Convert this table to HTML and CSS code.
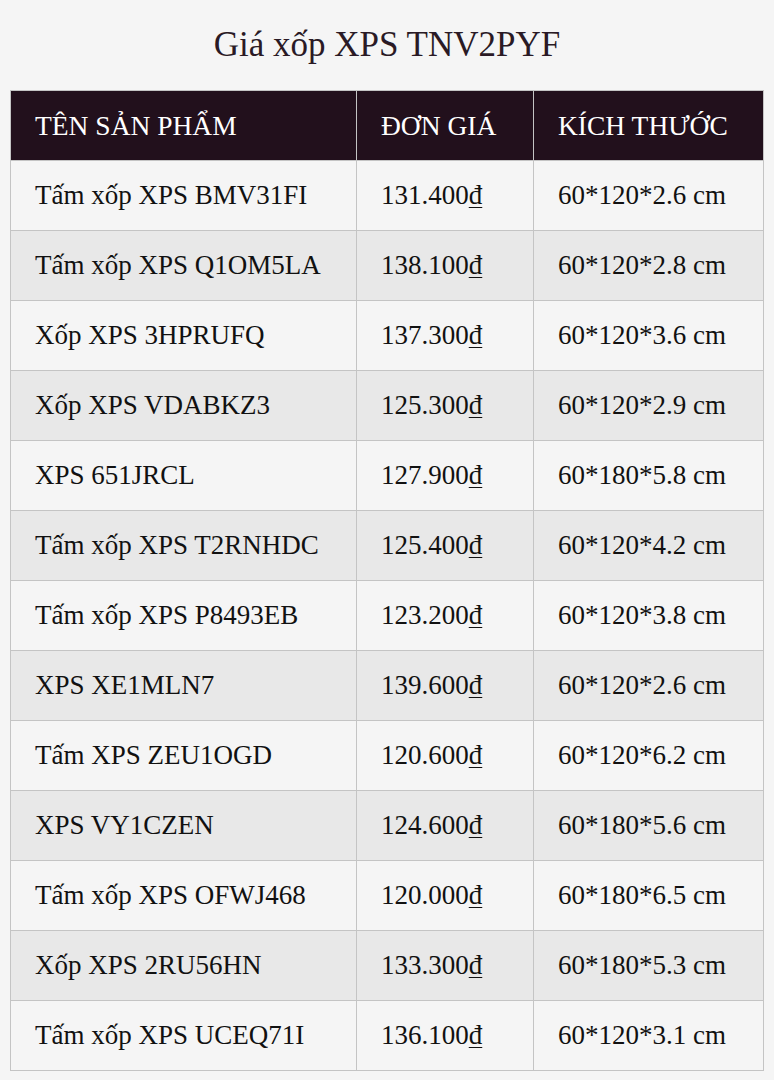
FILE: index.html
```html
<!DOCTYPE html>
<html lang="vi">
<head>
<meta charset="utf-8">
<link rel="stylesheet" href="styles.css">
</head>
<body>
<h1 class="title">Giá xốp XPS TNV2PYF</h1>
<table class="price-table">
  <colgroup>
    <col class="c-name"><col class="c-price"><col class="c-size">
  </colgroup>
  <thead>
    <tr><th>TÊN SẢN PHẨM</th><th>ĐƠN GIÁ</th><th>KÍCH THƯỚC</th></tr>
  </thead>
  <tbody>
    <tr><td>Tấm xốp XPS BMV31FI</td><td>131.400<u>đ</u></td><td>60*120*2.6 cm</td></tr>
    <tr><td>Tấm xốp XPS Q1OM5LA</td><td>138.100<u>đ</u></td><td>60*120*2.8 cm</td></tr>
    <tr><td>Xốp XPS 3HPRUFQ</td><td>137.300<u>đ</u></td><td>60*120*3.6 cm</td></tr>
    <tr><td>Xốp XPS VDABKZ3</td><td>125.300<u>đ</u></td><td>60*120*2.9 cm</td></tr>
    <tr><td>XPS 651JRCL</td><td>127.900<u>đ</u></td><td>60*180*5.8 cm</td></tr>
    <tr><td>Tấm xốp XPS T2RNHDC</td><td>125.400<u>đ</u></td><td>60*120*4.2 cm</td></tr>
    <tr><td>Tấm xốp XPS P8493EB</td><td>123.200<u>đ</u></td><td>60*120*3.8 cm</td></tr>
    <tr><td>XPS XE1MLN7</td><td>139.600<u>đ</u></td><td>60*120*2.6 cm</td></tr>
    <tr><td>Tấm XPS ZEU1OGD</td><td>120.600<u>đ</u></td><td>60*120*6.2 cm</td></tr>
    <tr><td>XPS VY1CZEN</td><td>124.600<u>đ</u></td><td>60*180*5.6 cm</td></tr>
    <tr><td>Tấm xốp XPS OFWJ468</td><td>120.000<u>đ</u></td><td>60*180*6.5 cm</td></tr>
    <tr><td>Xốp XPS 2RU56HN</td><td>133.300<u>đ</u></td><td>60*180*5.3 cm</td></tr>
    <tr><td>Tấm xốp XPS UCEQ71I</td><td>136.100<u>đ</u></td><td>60*120*3.1 cm</td></tr>
  </tbody>
</table>
</body>
</html>
```

FILE: styles.css
```css
html, body {
  margin: 0;
  background: #f5f5f5;
}
body {
  padding: 0 10px;
  font-family: "Liberation Serif", "DejaVu Serif", serif;
  color: #111;
}
.title {
  margin: 0;
  height: 90px;
  display: flex;
  align-items: center;
  justify-content: center;
  font-size: 35px;
  font-weight: normal;
  color: #2a1a25;
}
.price-table {
  width: 753px;
  border-collapse: collapse;
  table-layout: fixed;
}
.c-name { width: 346px; }
.c-price { width: 177px; }
.c-size { width: 230px; }
.price-table th,
.price-table td {
  height: 70px;
  box-sizing: border-box;
  padding: 0 0 0 24px;
  text-align: left;
  font-size: 27px;
  border: 1px solid #c4c4c4;
  white-space: nowrap;
}
.price-table th {
  background: #22101c;
  color: #fff;
  font-weight: normal;
  font-size: 27.5px;
}
.price-table tbody tr:nth-child(odd) td { background: #f5f5f5; }
.price-table tbody tr:nth-child(even) td { background: #e8e8e8; }
.price-table u {
  text-decoration-thickness: 1px;
  text-underline-offset: 3px;
}
```
